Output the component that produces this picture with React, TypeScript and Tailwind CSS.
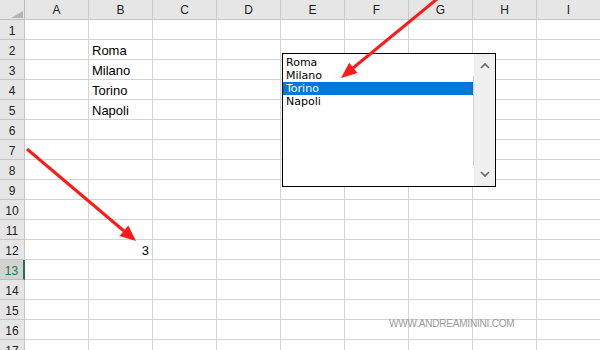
import React from "react";

const COLS = ["A", "B", "C", "D", "E", "F", "G", "H", "I"];
const ROWS = Array.from({ length: 17 }, (_, i) => i + 1);

const cellText: Record<string, { text: string; right?: boolean }> = {
  "2-B": { text: "Roma" },
  "3-B": { text: "Milano" },
  "4-B": { text: "Torino" },
  "5-B": { text: "Napoli" },
  "12-B": { text: "3", right: true },
};

const items = ["Roma", "Milano", "Torino", "Napoli"];

function Chevron({ up }: { up?: boolean }) {
  return (
    <svg width="10" height="6" viewBox="0 0 10 6" fill="none">
      <path
        d={up ? "M1 5L5 1L9 5" : "M1 1L5 5L9 1"}
        stroke="#606060"
        strokeWidth="1.6"
      />
    </svg>
  );
}

export default function App() {
  return (
    <div
      className="relative h-[350px] w-[600px] overflow-hidden bg-white text-[#1f1f1f]"
      style={{ fontFamily: '"Liberation Sans", Arial, sans-serif' }}
    >
      <div className="grid grid-cols-[25px_repeat(9,64px)] grid-rows-[repeat(18,20px)]">
        {/* corner */}
        <div className="relative border-b border-r border-[#bdbdbd] bg-[#e6e6e6]">
          <svg className="absolute left-[11px] top-[11px]" width="12" height="7" viewBox="0 0 12 7">
            <path d="M12 0L12 7L0 7Z" fill="#b6b6b6" />
          </svg>
        </div>
        {COLS.map((c) => (
          <div
            key={c}
            className="flex items-center justify-center border-b border-r border-[#c8c8c8] bg-[#e6e6e6] text-[12px] text-[#222]"
          >
            {c}
          </div>
        ))}

        {ROWS.map((r) => (
          <React.Fragment key={r}>
            <div
              className={`box-border h-[20px] pt-[3px] text-center text-[12px] leading-[17px] ${
                r === 13
                  ? "border-b border-r-2 border-b-[#bdbdbd] border-r-[#217346] bg-[#d2d2d2] text-[#217346]"
                  : "border-b border-r border-[#c6c6c6] bg-[#e6e6e6] text-[#222]"
              }`}
            >
              {r}
            </div>
            {COLS.map((c) => {
              const t = cellText[`${r}-${c}`];
              return (
                <div
                  key={c}
                  className={`box-border h-[20px] overflow-visible whitespace-nowrap border-b border-r border-[#d4d4d4] px-[3px] pt-[2px] text-[13px] leading-[18px] text-black ${
                    t?.right ? "text-right" : ""
                  }`}
                >
                  {t?.text}
                </div>
              );
            })}
          </React.Fragment>
        ))}
      </div>

      {/* list box control */}
      <div
        className="absolute left-[282px] top-[53px] flex h-[134px] w-[214px] border border-black bg-white"
        style={{ fontFamily: '"DejaVu Sans", Tahoma, sans-serif' }}
      >
        <div className="flex-1 pt-[2px]">
          {items.map((it) => (
            <div
              key={it}
              className={`h-[13px] pl-[3px] text-[11px] leading-[13px] ${
                it === "Torino" ? "bg-[#0078d7] text-white" : "text-black"
              }`}
            >
              {it}
            </div>
          ))}
        </div>
        <div className="flex w-[21px] flex-col items-center justify-between bg-[#f0f0f0] py-[9px]">
          <Chevron up />
          <Chevron />
        </div>
        <div className="absolute left-[190px] top-[22px] h-[90px] w-px bg-[#d0d0d0]" />
      </div>

      {/* arrows */}
      <svg className="pointer-events-none absolute left-0 top-0" width="600" height="350">
        <line x1="27" y1="149" x2="124" y2="231" stroke="#ff1a1a" strokeWidth="3" />
        <polygon points="136,241 119.5,236 128.3,225.6" fill="#ff1a1a" />
        <line x1="448" y1="-10" x2="353" y2="68" stroke="#ff1a1a" strokeWidth="3" />
        <polygon points="341,78 349.2,62.7 357.6,72.9" fill="#ff1a1a" />
      </svg>

      {/* watermark */}
      <div className="absolute left-[389px] top-[318px] text-[10px] leading-[12px] tracking-[-0.2px] text-[#9a9a9a]">
        WWW.ANDREAMININI.COM
      </div>
    </div>
  );
}
